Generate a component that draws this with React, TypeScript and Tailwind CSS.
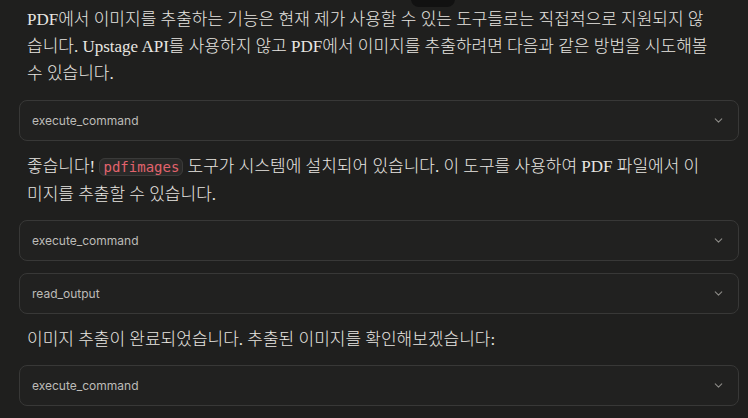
import React from "react";
import { ChevronDown } from "lucide-react";

const L = "font-normal";

function ToolBox({ label, className = "" }: { label: string; className?: string }) {
  return (
    <div
      className={`flex h-[41px] items-center justify-between rounded-lg border border-[#383837] bg-[#212120] pl-[12px] pr-[13px] ${className}`}
    >
      <span className="font-['Inter',sans-serif] text-[12px] text-[#bdbcb8]">{label}</span>
      <ChevronDown size={13} strokeWidth={2} className="text-[#8b8a86]" />
    </div>
  );
}

function P({ children }: { children: React.ReactNode }) {
  return (
    <p className="whitespace-nowrap pl-2 font-['Liberation_Serif','Noto_Sans_CJK_KR',serif] text-[17px] font-light leading-[27px] text-[#e8e6e1]">
      {children}
    </p>
  );
}

export default function App() {
  return (
    <div className="relative h-[418px] w-[748px] overflow-hidden bg-[#1f1f1e]">
      <div className="absolute left-[411px] top-[-10px] h-[17px] w-[44px] rounded-lg bg-[#111111]" />
      <div className="flex flex-col gap-3 pl-[19px] pr-[9px] pt-[6px]">
        <P>
          <span className={L}>PDF</span>에서 이미지를 추출하는 기능은 현재 제가 사용할 수 있는 도구들로는 직접적으로 지원되지 않
          <br />
          습니다<span className={L}>. Upstage API</span>를 사용하지 않고 <span className={L}>PDF</span>에서 이미지를 추출하려면 다음과 같은 방법을 시도해볼
          <br />수 있습니다<span className={L}>.</span>
        </P>
        <ToolBox label="execute_command" className="mt-px" />
        <P>
          좋습니다<span className={L}>!</span>{" "}
          <code className="rounded-md border border-[#3a3a39] bg-[#2a2a29] px-[3px] font-['DejaVu_Sans_Mono',monospace] text-[14px] font-normal text-[#e2636d]">
            pdfimages
          </code>{" "}
          도구가 시스템에 설치되어 있습니다<span className={L}>.</span> 이 도구를 사용하여 <span className={L}>PDF</span> 파일에서 이
          <br />
          미지를 추출할 수 있습니다<span className={L}>.</span>
        </P>
        <ToolBox label="execute_command" />
        <ToolBox label="read_output" />
        <P>
          이미지 추출이 완료되었습니다<span className={L}>.</span> 추출된 이미지를 확인해보겠습니다<span className={L}>:</span>
        </P>
        <ToolBox label="execute_command" />
      </div>
    </div>
  );
}
